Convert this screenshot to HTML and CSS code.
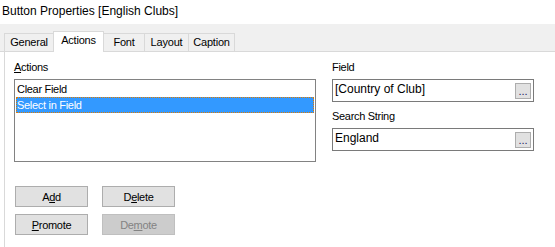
FILE: index.html
```html
<!DOCTYPE html>
<html lang="en">
<head>
    <meta charset="UTF-8">
    <meta name="viewport" content="width=device-width, initial-scale=1.0">
    <title>Button Properties</title>
    <link rel="stylesheet" href="styles.css">
</head>
<body>
    <div class="dialog">
        <div class="title">Button Properties [English Clubs]</div>

        <div class="tabs">
            <div class="tab">General</div>
            <div class="tab active">Actions</div>
            <div class="tab">Font</div>
            <div class="tab">Layout</div>
            <div class="tab">Caption</div>
        </div>

        <div class="panel">
            <div class="col-left">
                <div class="label"><u>A</u>ctions</div>
                <div class="listbox">
                    <div class="item">Clear Field</div>
                    <div class="item selected">Select in Field</div>
                </div>
                <div class="buttons">
                    <button class="btn">A<u>d</u>d</button>
                    <button class="btn">D<u>e</u>lete</button>
                    <button class="btn"><u>P</u>romote</button>
                    <button class="btn" disabled>De<u>m</u>ote</button>
                </div>
            </div>

            <div class="col-right">
                <div class="label">Field</div>
                <div class="textbox">
                    <span class="value">[Country of Club]</span>
                    <button class="dots">...</button>
                </div>
                <div class="label second">Search String</div>
                <div class="textbox">
                    <span class="value">England</span>
                    <button class="dots">...</button>
                </div>
            </div>
        </div>
    </div>
</body>
</html>
```

FILE: styles.css
```css
* { box-sizing: border-box; }
body { margin: 0; background: #fff; font-family: "Liberation Sans", Arial, sans-serif; color: #000; }
.dialog { width: 555px; height: 247px; overflow: hidden; }

.title { height: 24px; padding: 4px 0 0 2px; font-size: 12px; line-height: 14px; }

.tabs { display: flex; align-items: flex-end; height: 28px; padding-left: 4px; background: #f0f0f0; border-bottom: 1px solid #d9d9d9; }
.tab { height: 18px; border: 1px solid #d9d9d9; border-bottom: 0; border-right: 0; background: #f0f0f0; font-size: 11px; letter-spacing: -0.2px; line-height: 17px; text-align: center; }
.tab:nth-child(1) { width: 49px; }
.tab:nth-child(2) { width: 51px; }
.tab:nth-child(3) { width: 40px; }
.tab:nth-child(4) { width: 44px; }
.tab:nth-child(5) { width: 47px; border-right: 1px solid #d9d9d9; }
.tab.active { height: 21px; margin-bottom: -1px; background: #fff; border-right: 1px solid #d9d9d9; line-height: 16px; position: relative; }
.tab.active + .tab { border-left: 0; }

.panel { display: flex; gap: 16px; margin-left: 4px; height: 195px; padding: 9px 0 0 9px; border-left: 1px solid #d9d9d9; font-size: 11px; letter-spacing: -0.3px; }
.col-left { width: 302px; }
.col-right { width: 202px; }

.label { line-height: 13px; margin-bottom: 5px; }
.label.second { margin-top: 8px; }

.listbox { height: 83px; border: 1px solid #828282; padding: 1px; }
.item { height: 16px; line-height: 16px; padding-left: 1px; }
.item.selected { background: #3399ff; color: #fff; outline: 1px dotted #e07b00; outline-offset: -1px; }

.buttons { display: grid; grid-template-columns: 73px 73px; column-gap: 14px; row-gap: 7px; margin-top: 24px; margin-left: 1px; }
.btn { height: 21px; padding: 0; border: 1px solid #adadad; background: #e1e1e1; font-family: inherit; font-size: 11px; letter-spacing: -0.3px; color: #000; }
.btn:disabled { background: #cccccc; border-color: #bfbfbf; color: #838383; }

.textbox { display: flex; align-items: flex-start; justify-content: space-between; height: 23px; border: 1px solid #7a7a7a; padding: 1px 2px 0 2px; }
.value { font-size: 12px; line-height: 16px; letter-spacing: 0; }
.dots { width: 16px; height: 16px; margin-top: 2px; padding: 0; border: 1px solid #adadad; background: #e1e1e1; font-family: inherit; font-size: 11px; line-height: 14px; letter-spacing: 0; color: #202060; }
```
